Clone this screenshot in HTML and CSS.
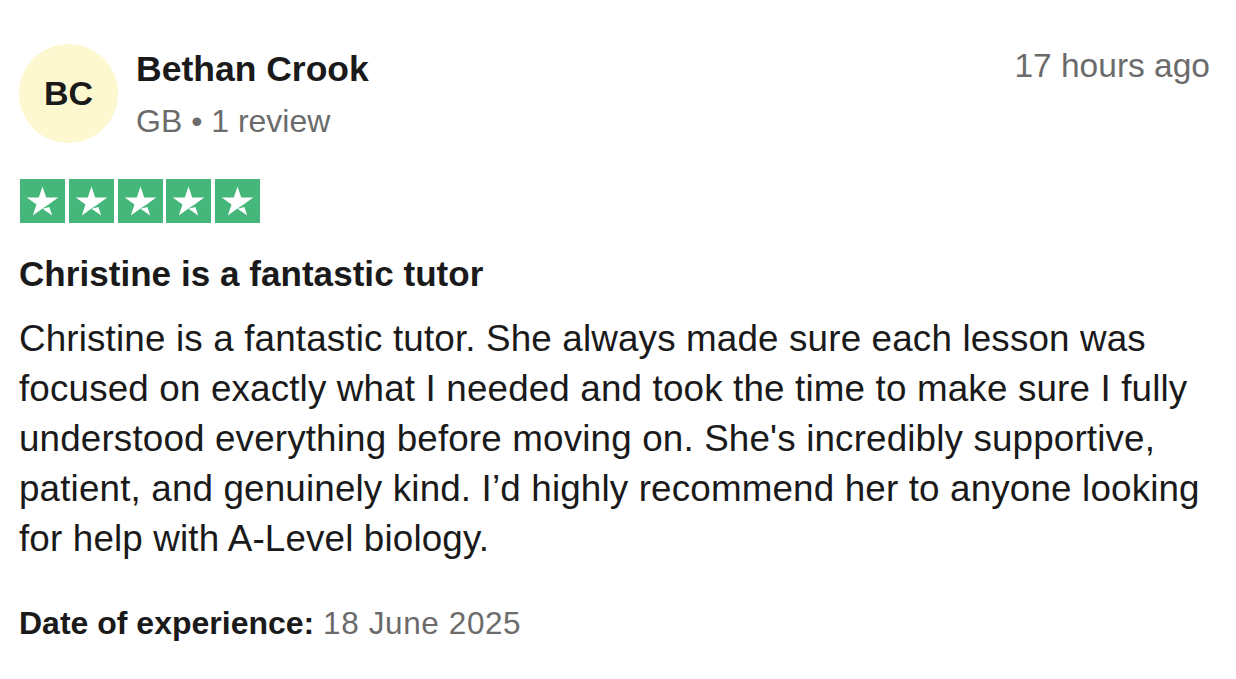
FILE: index.html
```html
<!DOCTYPE html>
<html lang="en">
<head>
<meta charset="utf-8">
<title>Review</title>
<link rel="stylesheet" href="styles.css">
</head>
<body>
<article class="review">
  <header class="review-header">
    <div class="avatar">BC</div>
    <div class="consumer">
      <div class="consumer-name">Bethan Crook</div>
      <div class="consumer-meta">GB • 1 review</div>
    </div>
    <time class="review-time">17 hours ago</time>
  </header>

  <div class="stars" aria-label="Rated 5 out of 5">
    <svg class="star" viewBox="0 0 96 96" preserveAspectRatio="none"><rect width="96" height="96" fill="#46b77a"/><path fill="#fff" d="M48 64.7L62.6 61L68.7 79.8Z M81.6 40.4H55.9L48 16.2L40.1 40.4H14.4L35.2 55.4L27.3 79.6L48.1 64.6L60.9 55.4Z"/></svg>
    <svg class="star" viewBox="0 0 96 96" preserveAspectRatio="none"><rect width="96" height="96" fill="#46b77a"/><path fill="#fff" d="M48 64.7L62.6 61L68.7 79.8Z M81.6 40.4H55.9L48 16.2L40.1 40.4H14.4L35.2 55.4L27.3 79.6L48.1 64.6L60.9 55.4Z"/></svg>
    <svg class="star" viewBox="0 0 96 96" preserveAspectRatio="none"><rect width="96" height="96" fill="#46b77a"/><path fill="#fff" d="M48 64.7L62.6 61L68.7 79.8Z M81.6 40.4H55.9L48 16.2L40.1 40.4H14.4L35.2 55.4L27.3 79.6L48.1 64.6L60.9 55.4Z"/></svg>
    <svg class="star" viewBox="0 0 96 96" preserveAspectRatio="none"><rect width="96" height="96" fill="#46b77a"/><path fill="#fff" d="M48 64.7L62.6 61L68.7 79.8Z M81.6 40.4H55.9L48 16.2L40.1 40.4H14.4L35.2 55.4L27.3 79.6L48.1 64.6L60.9 55.4Z"/></svg>
    <svg class="star" viewBox="0 0 96 96" preserveAspectRatio="none"><rect width="96" height="96" fill="#46b77a"/><path fill="#fff" d="M48 64.7L62.6 61L68.7 79.8Z M81.6 40.4H55.9L48 16.2L40.1 40.4H14.4L35.2 55.4L27.3 79.6L48.1 64.6L60.9 55.4Z"/></svg>
  </div>

  <h2 class="review-title">Christine is a fantastic tutor</h2>

  <p class="review-text">Christine is a fantastic tutor. She always made sure each lesson was focused on exactly what I needed and took the time to make sure I fully understood everything before moving on. She's incredibly supportive, patient, and genuinely kind. I’d highly recommend her to anyone looking for help with A-Level biology.</p>

  <p class="review-date"><span class="date-label">Date of experience:</span> <span class="date-value">18 June 2025</span></p>
</article>
</body>
</html>
```

FILE: styles.css
```css
html, body {
  margin: 0;
  padding: 0;
  background: #ffffff;
}

body {
  font-family: "Liberation Sans", Arial, Helvetica, sans-serif;
  color: #1a1a1a;
}

.review {
  padding: 44px 26px 0 19px;
  display: flex;
  flex-direction: column;
}

.review-header {
  display: flex;
  align-items: flex-start;
}

.avatar {
  width: 99px;
  height: 99px;
  border-radius: 50%;
  background: #fdf8d0;
  flex: none;
  display: flex;
  align-items: center;
  justify-content: center;
  font-weight: 700;
  font-size: 34px;
  color: #1a1a1a;
}

.consumer {
  margin-left: 18px;
  margin-top: 5px;
  display: flex;
  flex-direction: column;
  gap: 12px;
  flex: 1;
}

.consumer-name {
  font-size: 35.5px;
  font-weight: 700;
  line-height: 40px;
  color: #1a1a1a;
}

.consumer-meta {
  font-size: 32px;
  line-height: 40px;
  color: #6b6b6b;
}

.review-time {
  margin-top: 2px;
  font-size: 33.5px;
  line-height: 40px;
  color: #6b6b6b;
}

.stars {
  margin-top: 36px;
  margin-left: 1px;
  display: flex;
  gap: 3.75px;
}

.star {
  width: 45px;
  height: 44px;
  display: block;
}

.review-title {
  margin: 31px 0 0 0;
  font-size: 35px;
  font-weight: 700;
  line-height: 40px;
  letter-spacing: 0.05px;
  color: #1a1a1a;
}

.review-text {
  margin: 20px 0 0 0;
  font-size: 36.8px;
  line-height: 50px;
  letter-spacing: 0.15px;
  color: #1a1a1a;
}

.review-date {
  margin: 39px 0 0 0;
  font-size: 32px;
  line-height: 40px;
}

.date-label {
  font-weight: 700;
  color: #1a1a1a;
}

.date-value {
  font-size: 31.5px;
  letter-spacing: 0.6px;
  color: #6b6b6b;
}
```
